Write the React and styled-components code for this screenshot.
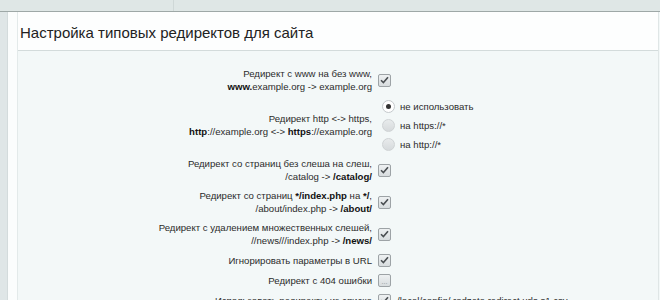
import styled, { createGlobalStyle } from "styled-components"

const Global = createGlobalStyle`
    html, body {
        margin: 0;
        padding: 0;
        background: #f3f8f8;
        font-family: "Liberation Sans", Arial, sans-serif;
    }
`

const rows = [
    {
        type: "check",
        checked: true,
        lines: [
            <>Редирект с www на без www,</>,
            <><b>www.</b>example.org -&gt; example.org</>,
        ],
    },
    {
        type: "radio",
        lines: [
            <>Редирект http &lt;-&gt; https,</>,
            <><b>http</b>://example.org &lt;-&gt; <b>https</b>://example.org</>,
        ],
        options: ["не использовать", "на https://*", "на http://*"],
        selected: 0,
    },
    {
        type: "check",
        checked: true,
        lines: [
            <>Редирект со страниц без слеша на слеш,</>,
            <>/catalog -&gt; <b>/catalog/</b></>,
        ],
    },
    {
        type: "check",
        checked: true,
        lines: [
            <>Редирект со страниц <b>*/index.php</b> на <b>*/</b>,</>,
            <>/about/index.php -&gt; <b>/about/</b></>,
        ],
    },
    {
        type: "check",
        checked: true,
        lines: [
            <>Редирект с удалением множественных слешей,</>,
            <>//news///index.php -&gt; <b>/news/</b></>,
        ],
    },
    { type: "check", checked: true, lines: [<>Игнорировать параметры в URL</>] },
    { type: "check", checked: false, lines: [<>Редирект с 404 ошибки</>] },
    {
        type: "check",
        checked: true,
        lines: [<>Использовать редиректы из списка</>],
        note: "/local/config/.rodzeta.redirect.urls.s1.csv",
    },
]

function CheckBox({ checked }) {
    return (
        <Box>
            {checked ? (
                <svg width="9" height="8" viewBox="0 0 9 8">
                    <path d="M1 4.2 L3.4 6.6 L8 1.2" fill="none" stroke="#4a4f52" strokeWidth="1.6" />
                </svg>
            ) : (
                <Dots>...</Dots>
            )}
        </Box>
    )
}

export default function App() {
    return (
        <Page>
            <Global />
            <TopBar>
                <TopTab />
            </TopBar>
            <Body>
                <LeftRail />
                <Gutter />
                <Panel>
                    <Header>
                        <Title>Настройка типовых редиректов для сайта</Title>
                    </Header>
                    <Content>
                        {rows.map((row, i) => (
                            <Row key={i} $tall={row.lines.length > 1}>
                                <Label>
                                    {row.lines.map((l, j) => (
                                        <div key={j}>{l}</div>
                                    ))}
                                </Label>
                                <Control>
                                    {row.type === "check" && (
                                        <Inline>
                                            <CheckBox checked={row.checked} />
                                            {row.note && <Note>{row.note}</Note>}
                                        </Inline>
                                    )}
                                    {row.type === "radio" && (
                                        <RadioList>
                                            {row.options.map((o, k) => (
                                                <RadioItem key={k}>
                                                    <Radio $on={k === row.selected} />
                                                    <span>{o}</span>
                                                </RadioItem>
                                            ))}
                                        </RadioList>
                                    )}
                                </Control>
                            </Row>
                        ))}
                    </Content>
                </Panel>
            </Body>
        </Page>
    )
}

const Page = styled.div`
    width: 660px;
    height: 300px;
    overflow: hidden;
    display: flex;
    flex-direction: column;
    background: #f3f8f8;
`
const TopBar = styled.div`
    height: 11px;
    flex-shrink: 0;
    background: #dfe7e6;
    border-bottom: 1px solid #9ea8a7;
    display: flex;
`
const TopTab = styled.div`
    width: 173px;
    border-right: 1px solid #cfd8d7;
`
const Body = styled.div`
    flex: 1;
    display: flex;
    min-height: 0;
`
const LeftRail = styled.div`
    width: 7px;
    background: #dfe6e7;
    border-right: 1px solid #d3dbdc;
`
const Gutter = styled.div`
    width: 9px;
    background: #fbfdfd;
    border-right: 1px solid #e3eaea;
`
const Panel = styled.div`
    flex: 1;
    display: flex;
    flex-direction: column;
    min-height: 0;
    border-right: 1px solid #dfe6e6;
    margin-right: 1px;
`
const Header = styled.div`
    height: 38px;
    flex-shrink: 0;
    background: #fdfefe;
    border-bottom: 1px solid #d3dbdb;
    display: flex;
    align-items: center;
    padding-left: 2px;
`
const Title = styled.div`
    font-size: 15px;
    color: #222;
    padding-top: 3px;
`
const Content = styled.div`
    flex: 1;
    overflow: hidden;
    background: #f3f8f8;
    padding-top: 13px;
`
const Row = styled.div`
    display: grid;
    grid-template-columns: 359px 1fr;
    align-items: center;
    min-height: ${p => (p.$tall ? "32px" : "20px")};
    font-size: 9.6px;
    line-height: 13px;
    color: #2b2b2b;
`
const Label = styled.div`
    text-align: right;
    padding-right: 5px;
    b {
        color: #111;
    }
`
const Control = styled.div`
    padding-left: 1px;
`
const Inline = styled.div`
    display: flex;
    align-items: center;
    gap: 6px;
`
const Note = styled.span`
    font-size: 9.6px;
    color: #2b2b2b;
`
const Box = styled.div`
    width: 11px;
    height: 11px;
    border: 1px solid #9da3a6;
    border-radius: 2px;
    background: linear-gradient(#eef1f2, #d7dcde);
    display: flex;
    align-items: center;
    justify-content: center;
`
const Dots = styled.span`
    font-size: 7px;
    line-height: 7px;
    color: #8a9094;
    margin-top: 2px;
`
const RadioList = styled.div`
    display: flex;
    flex-direction: column;
    gap: 5px;
    padding: 3px 0 3px 4px;
`
const RadioItem = styled.div`
    display: flex;
    align-items: center;
    gap: 5px;
    height: 14px;
`
const Radio = styled.div`
    width: 11px;
    height: 11px;
    border-radius: 50%;
    border: 1px solid ${p => (p.$on ? "#c4c9cc" : "#cfd3d5")};
    background: ${p => (p.$on ? "#fff" : "linear-gradient(#e8ebec, #d6dadc)")};
    display: flex;
    align-items: center;
    justify-content: center;
    &::after {
        content: "";
        display: ${p => (p.$on ? "block" : "none")};
        width: 5px;
        height: 5px;
        border-radius: 50%;
        background: #333;
    }
`
